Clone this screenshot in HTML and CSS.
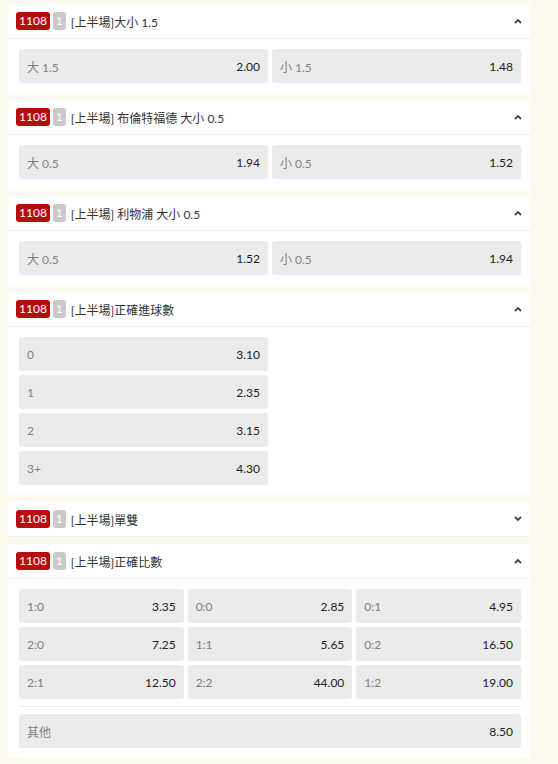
FILE: index.html
```
<!DOCTYPE html>
<html lang="zh-Hant">
<head>
<meta charset="utf-8">
<link rel="stylesheet" href="styles.css">
</head>
<body>
<div class="page">

  <section class="card">
    <div class="hd">
      <span class="code">1108</span><span class="num">1</span><span class="title">[上半場]大小 1.5</span>
      <svg class="chev" width="8" height="6" viewBox="0 0 8 6"><polyline points="1,5 4,2 7,5" fill="none" stroke="#444" stroke-width="1.8"/></svg>
    </div>
    <div class="bd grid2">
      <div class="btn"><span class="lbl">大 1.5</span><span class="odd">2.00</span></div>
      <div class="btn"><span class="lbl">小 1.5</span><span class="odd">1.48</span></div>
    </div>
  </section>

  <section class="card">
    <div class="hd">
      <span class="code">1108</span><span class="num">1</span><span class="title">[上半場] 布倫特福德 大小 0.5</span>
      <svg class="chev" width="8" height="6" viewBox="0 0 8 6"><polyline points="1,5 4,2 7,5" fill="none" stroke="#444" stroke-width="1.8"/></svg>
    </div>
    <div class="bd grid2">
      <div class="btn"><span class="lbl">大 0.5</span><span class="odd">1.94</span></div>
      <div class="btn"><span class="lbl">小 0.5</span><span class="odd">1.52</span></div>
    </div>
  </section>

  <section class="card">
    <div class="hd">
      <span class="code">1108</span><span class="num">1</span><span class="title">[上半場] 利物浦 大小 0.5</span>
      <svg class="chev" width="8" height="6" viewBox="0 0 8 6"><polyline points="1,5 4,2 7,5" fill="none" stroke="#444" stroke-width="1.8"/></svg>
    </div>
    <div class="bd grid2">
      <div class="btn"><span class="lbl">大 0.5</span><span class="odd">1.52</span></div>
      <div class="btn"><span class="lbl">小 0.5</span><span class="odd">1.94</span></div>
    </div>
  </section>

  <section class="card">
    <div class="hd">
      <span class="code">1108</span><span class="num">1</span><span class="title">[上半場]正確進球數</span>
      <svg class="chev" width="8" height="6" viewBox="0 0 8 6"><polyline points="1,5 4,2 7,5" fill="none" stroke="#444" stroke-width="1.8"/></svg>
    </div>
    <div class="bd grid2">
      <div class="btn c1"><span class="lbl">0</span><span class="odd">3.10</span></div>
      <div class="btn c1"><span class="lbl">1</span><span class="odd">2.35</span></div>
      <div class="btn c1"><span class="lbl">2</span><span class="odd">3.15</span></div>
      <div class="btn c1"><span class="lbl">3+</span><span class="odd">4.30</span></div>
    </div>
  </section>

  <section class="card">
    <div class="hd">
      <span class="code">1108</span><span class="num">1</span><span class="title">[上半場]單雙</span>
      <svg class="chev" width="8" height="6" viewBox="0 0 8 6"><polyline points="1,1 4,4 7,1" fill="none" stroke="#444" stroke-width="1.8"/></svg>
    </div>
  </section>

  <section class="card">
    <div class="hd">
      <span class="code">1108</span><span class="num">1</span><span class="title">[上半場]正確比數</span>
      <svg class="chev" width="8" height="6" viewBox="0 0 8 6"><polyline points="1,5 4,2 7,5" fill="none" stroke="#444" stroke-width="1.8"/></svg>
    </div>
    <div class="bd">
      <div class="grid3">
        <div class="btn"><span class="lbl">1:0</span><span class="odd">3.35</span></div>
        <div class="btn"><span class="lbl">0:0</span><span class="odd">2.85</span></div>
        <div class="btn"><span class="lbl">0:1</span><span class="odd">4.95</span></div>
        <div class="btn"><span class="lbl">2:0</span><span class="odd">7.25</span></div>
        <div class="btn"><span class="lbl">1:1</span><span class="odd">5.65</span></div>
        <div class="btn"><span class="lbl">0:2</span><span class="odd">16.50</span></div>
        <div class="btn"><span class="lbl">2:1</span><span class="odd">12.50</span></div>
        <div class="btn"><span class="lbl">2:2</span><span class="odd">44.00</span></div>
        <div class="btn"><span class="lbl">1:2</span><span class="odd">19.00</span></div>
      </div>
      <div class="sep"></div>
      <div class="btn"><span class="lbl">其他</span><span class="odd">8.50</span></div>
    </div>
  </section>

</div>
</body>
</html>
```
FILE: styles.css
```
* { box-sizing: border-box; }
html, body {
  margin: 0;
  background: #fdfaf0;
}
body {
  font-family: "Lato", "Noto Sans CJK TC", sans-serif;
  font-size: 12px;
  color: #333;
}
.page {
  width: 530px;
  padding: 4px 0 0 8px;
}
.card {
  background: #fff;
  margin-bottom: 7px;
}
.hd {
  height: 35px;
  border-bottom: 1px solid #f0efea;
  display: flex;
  align-items: center;
  padding: 0 8px;
}
.code {
  background: #b80c0c;
  color: #fff;
  height: 18px;
  line-height: 18px;
  padding: 0 3px;
  border-radius: 3px;
  font-size: 12px;
}
.num {
  background: #c9c9cb;
  color: #fff;
  height: 18px;
  line-height: 18px;
  width: 13px;
  text-align: center;
  border-radius: 3px;
  margin-left: 3px;
  font-size: 12px;
}
.title {
  margin-left: 5px;
  color: #333;
  flex: 1;
}
.chev { margin-right: 0; }
.bd {
  padding: 10px 9px 10px 11px;
}
.grid2 {
  display: grid;
  grid-template-columns: 1fr 1fr;
  gap: 4px;
}
.grid3 {
  display: grid;
  grid-template-columns: 1fr 1fr 1fr;
  gap: 4px;
}
.btn {
  background: #ebebeb;
  border-radius: 3px;
  height: 34px;
  display: flex;
  align-items: center;
  justify-content: space-between;
  padding: 0 8px;
}
.c1 { grid-column: 1; }
.lbl { color: #808080; }
.odd { color: #222; }
.sep {
  height: 1px;
  background: #eaeaea;
  margin: 7px 0;
}
```
